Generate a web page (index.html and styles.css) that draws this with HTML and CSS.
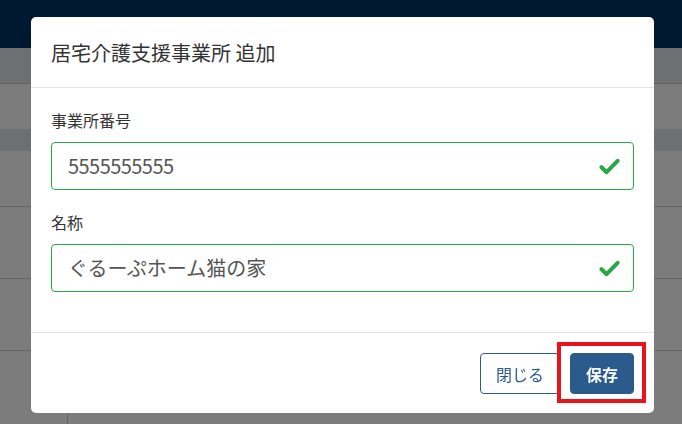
FILE: index.html
```html
<!DOCTYPE html>
<html lang="ja">
<head>
<meta charset="utf-8">
<title>居宅介護支援事業所 追加</title>
<link rel="stylesheet" href="styles.css">
</head>
<body>
<div class="page">
  <div class="topbar"></div>
  <div class="table">
    <div class="row row-head"></div>
    <div class="row row-a"></div>
    <div class="row row-band"></div>
    <div class="row row-b"></div>
    <div class="row row-c"></div>
    <div class="row row-c"></div>
    <div class="row row-last"><div class="cell-first"></div></div>
  </div>
</div>
<div class="backdrop">
  <div class="modal">
    <div class="modal-header">
      <h5 class="modal-title">居宅介護支援事業所 追加</h5>
    </div>
    <div class="modal-body">
      <div class="form-group">
        <label class="label">事業所番号</label>
        <div class="field">
          <span class="field-value field-number">5555555555</span>
          <svg class="check" viewBox="0 0 21 17" width="21" height="17"><polyline points="2.5,9.2 7.6,14.2 18.6,2.8" fill="none" stroke="#28a745" stroke-width="4" stroke-linecap="round" stroke-linejoin="round"/></svg>
        </div>
      </div>
      <div class="form-group">
        <label class="label">名称</label>
        <div class="field">
          <span class="field-value">ぐるーぷホーム猫の家</span>
          <svg class="check" viewBox="0 0 21 17" width="21" height="17"><polyline points="2.5,9.2 7.6,14.2 18.6,2.8" fill="none" stroke="#28a745" stroke-width="4" stroke-linecap="round" stroke-linejoin="round"/></svg>
        </div>
      </div>
    </div>
    <div class="modal-footer">
      <button class="btn btn-outline">閉じる</button>
      <div class="save-wrap">
        <button class="btn btn-primary">保存</button>
        <div class="highlight"></div>
      </div>
    </div>
  </div>
</div>
</body>
</html>
```
FILE: styles.css
```css
* { box-sizing: border-box; }
html, body { margin: 0; padding: 0; }
body {
  width: 682px;
  height: 424px;
  overflow: hidden;
  background: #fff;
  font-family: "Noto Sans CJK JP", "Noto Sans", sans-serif;
  color: #333;
}
.page { width: 682px; }
.topbar { height: 48px; background: #02356a; }
.table { display: flex; flex-direction: column; }
.row { border-bottom: 1px solid #d0d0d0; }
.row-head { height: 36px; background: #e2e4e8; }
.row-a { height: 46px; border-bottom: 1px solid #e0e2e6; }
.row-band { height: 21px; background: #e2e4e8; border-bottom: none; }
.row-b { height: 56px; }
.row-c { height: 72px; }
.row-last { height: 80px; display: flex; }
.cell-first { width: 68px; border-right: 1px solid #d0d0d0; margin-top: 60px; }

.backdrop {
  position: fixed;
  inset: 0;
  background: rgba(0, 0, 0, 0.515);
  padding: 17px 28px 0 31px;
}
.modal {
  width: 623px;
  background: #fff;
  border-radius: 5px;
  display: flex;
  flex-direction: column;
}
.modal-header {
  height: 71px;
  padding: 0 20px;
  display: flex;
  align-items: center;
  border-bottom: 1px solid #e3e3e3;
}
.modal-title {
  margin: 0;
  font-size: 20px;
  font-weight: 400;
  line-height: 30px;
  color: #333;
  padding-top: 1px;
}
.modal-body { padding: 20px 20px 20px; }
.form-group { margin-bottom: 20px; }
.label {
  display: block;
  font-size: 16px;
  line-height: 24px;
  margin-bottom: 10px;
  color: #333;
}
.field {
  height: 48px;
  border: 1px solid #28a745;
  border-radius: 4px;
  display: flex;
  align-items: center;
  justify-content: space-between;
  padding: 0 13px 0 16px;
}
.field-value {
  font-size: 20px;
  line-height: 30px;
  color: #555;
}
.field-number { letter-spacing: -0.55px; }
.check { display: block; }
.modal-footer {
  border-top: 1px solid #e3e3e3;
  padding: 20px 20px 19px;
  display: flex;
  justify-content: flex-end;
  gap: 10px;
}
.btn {
  font-family: "Noto Sans CJK JP", "Noto Sans", sans-serif;
  font-size: 16px;
  line-height: 24px;
  padding: 7.5px 15px;
  border-radius: 4px;
  border: 1px solid #2a5b8c;
  cursor: pointer;
}
.btn-outline { background: #fff; color: #2a5b8c; width: 80px; }
.btn-primary { background: #2a5b8c; color: #fff; font-weight: 700; width: 64px; }
.save-wrap { position: relative; display: flex; }
.highlight {
  position: absolute;
  left: -13px;
  right: -12px;
  top: -11px;
  bottom: -9px;
  border: 4.5px solid #e8141c;
}
```
